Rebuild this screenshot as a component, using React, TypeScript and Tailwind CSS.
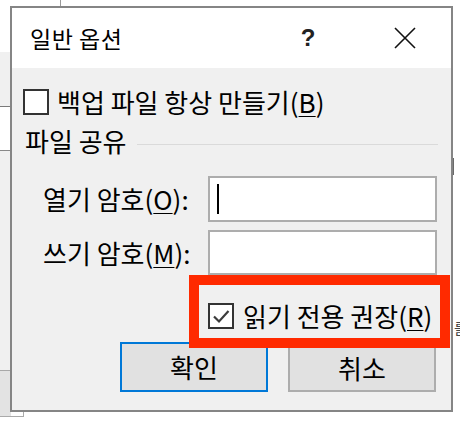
import React from 'react';

const font = { fontFamily: '"Noto Sans CJK KR", "Noto Sans", sans-serif' };

const Box: React.FC<{ checked?: boolean }> = ({ checked }) => (
    <div className="w-[26px] h-[26px] border-2 border-[#333333] bg-white flex items-center justify-center shrink-0">
        {checked && (
            <svg width="20" height="20" viewBox="0 0 20 20">
                <path d="M3 10.5 L8 15.5 L17.5 5" fill="none" stroke="#3c3c3c" strokeWidth="2.2" />
            </svg>
        )}
    </div>
);

const Key: React.FC<{ k: string }> = ({ k }) => (
    <>(<span className="underline underline-offset-[3px] decoration-1">{k}</span>)</>
);

const App: React.FC = () => {
    return (
        <div className="relative w-[460px] h-[422px] bg-white overflow-hidden text-black" style={font}>
            {/* what is behind the dialog */}
            <div className="absolute left-[60px] top-0 w-px h-[7px] bg-[#9a9a9a]" />
            <div className="absolute left-0 top-[52px] w-[11px] h-[54px] bg-[#f0f0f0]" />
            <div className="absolute left-0 top-[106px] w-[11px] h-px bg-[#7a7a7a]" />
            <div className="absolute left-0 top-[150px] w-[11px] h-px bg-[#888888]" />
            <div className="absolute left-0 top-[151px] w-[11px] h-[219px] bg-[#f0f0f0]" />
            <div className="absolute left-0 top-[370px] w-[11px] h-px bg-[#a8a8a8]" />
            <div className="absolute left-0 top-[371px] w-[11px] h-[45px] bg-[#e3e3e3]" />
            <div className="absolute left-0 top-[416px] w-[24px] h-px bg-[#aaaaaa]" />
            <div className="absolute left-[23px] top-[410px] w-px h-[6px] bg-[#aaaaaa]" />
            <div className="absolute left-[451px] top-[158px] w-[3px] h-[17px] bg-[#6a6a6a]" />
            <div className="absolute left-[454px] top-[320px] text-[15px] leading-none text-[#444]">를</div>

            {/* dialog */}
            <div className="absolute left-[10px] top-[6px] w-[443px] h-[406px] border-2 border-[#858585] bg-[#f0f0f0] flex flex-col">
                <div className="h-[60px] bg-white flex items-center shrink-0">
                    <span className="ml-[18px] text-[23px] leading-none tracking-[0.5px]">일반 옵션</span>
                    <span className="ml-auto w-[20px] text-center text-[24px] leading-none font-bold text-[#222]" style={{ fontFamily: '"Liberation Sans", sans-serif' }}>?</span>
                    <svg className="ml-[76px] mr-[35px]" width="22" height="22" viewBox="0 0 22 22">
                        <path d="M1 1 L21 21 M21 1 L1 21" stroke="#111" strokeWidth="1.6" />
                    </svg>
                </div>

                <div className="flex flex-col">
                    <div className="mt-[19px] h-[30px] ml-[11px] flex items-center gap-[8px]">
                        <Box />
                        <span className="text-[26px] leading-none">백업 파일 항상 만들기<Key k="B" /></span>
                    </div>

                    <div className="mt-[10px] h-[28px] ml-[13px] mr-[13px] flex items-center">
                        <span className="text-[26px] leading-none">파일 공유</span>
                        <div className="flex-1 h-px bg-[#dadada] ml-[10px] mt-[6px]" />
                    </div>

                    <div className="mt-[21px] flex items-center">
                        <span className="w-[196px] pl-[31px] text-[26px] leading-none">열기 암호<Key k="O" />:</span>
                        <div className="w-[229px] h-[46px] border-2 border-[#adadad] bg-white flex items-center">
                            <div className="ml-[7px] w-[2px] h-[30px] bg-black" />
                        </div>
                    </div>

                    <div className="mt-[8px] flex items-center">
                        <span className="w-[196px] pl-[31px] text-[26px] leading-none">쓰기 암호<Key k="M" />:</span>
                        <div className="w-[229px] h-[45px] border-2 border-[#adadad] bg-white" />
                    </div>

                    <div className="mt-[25px] h-[31px] ml-[196px] flex items-center gap-[9px]">
                        <Box checked />
                        <span className="text-[26px] leading-none">읽기 전용 권장<Key k="R" /></span>
                    </div>

                    <div className="mt-[11px] ml-[108px] flex gap-[20px]">
                        <button className="w-[148px] h-[50px] border-2 border-[#0078d7] bg-[#e1e1e1] text-[26px] leading-none">확인</button>
                        <button className="w-[148px] h-[49px] mt-px border-2 border-[#adadad] bg-[#e1e1e1] text-[26px] leading-none">취소</button>
                    </div>
                </div>
            </div>

            {/* red highlight */}
            <div className="absolute left-[189px] top-[275px] w-[261px] h-[73px] border-[10px] border-[#ff2a00] pointer-events-none" />
        </div>
    );
};

export default App;
